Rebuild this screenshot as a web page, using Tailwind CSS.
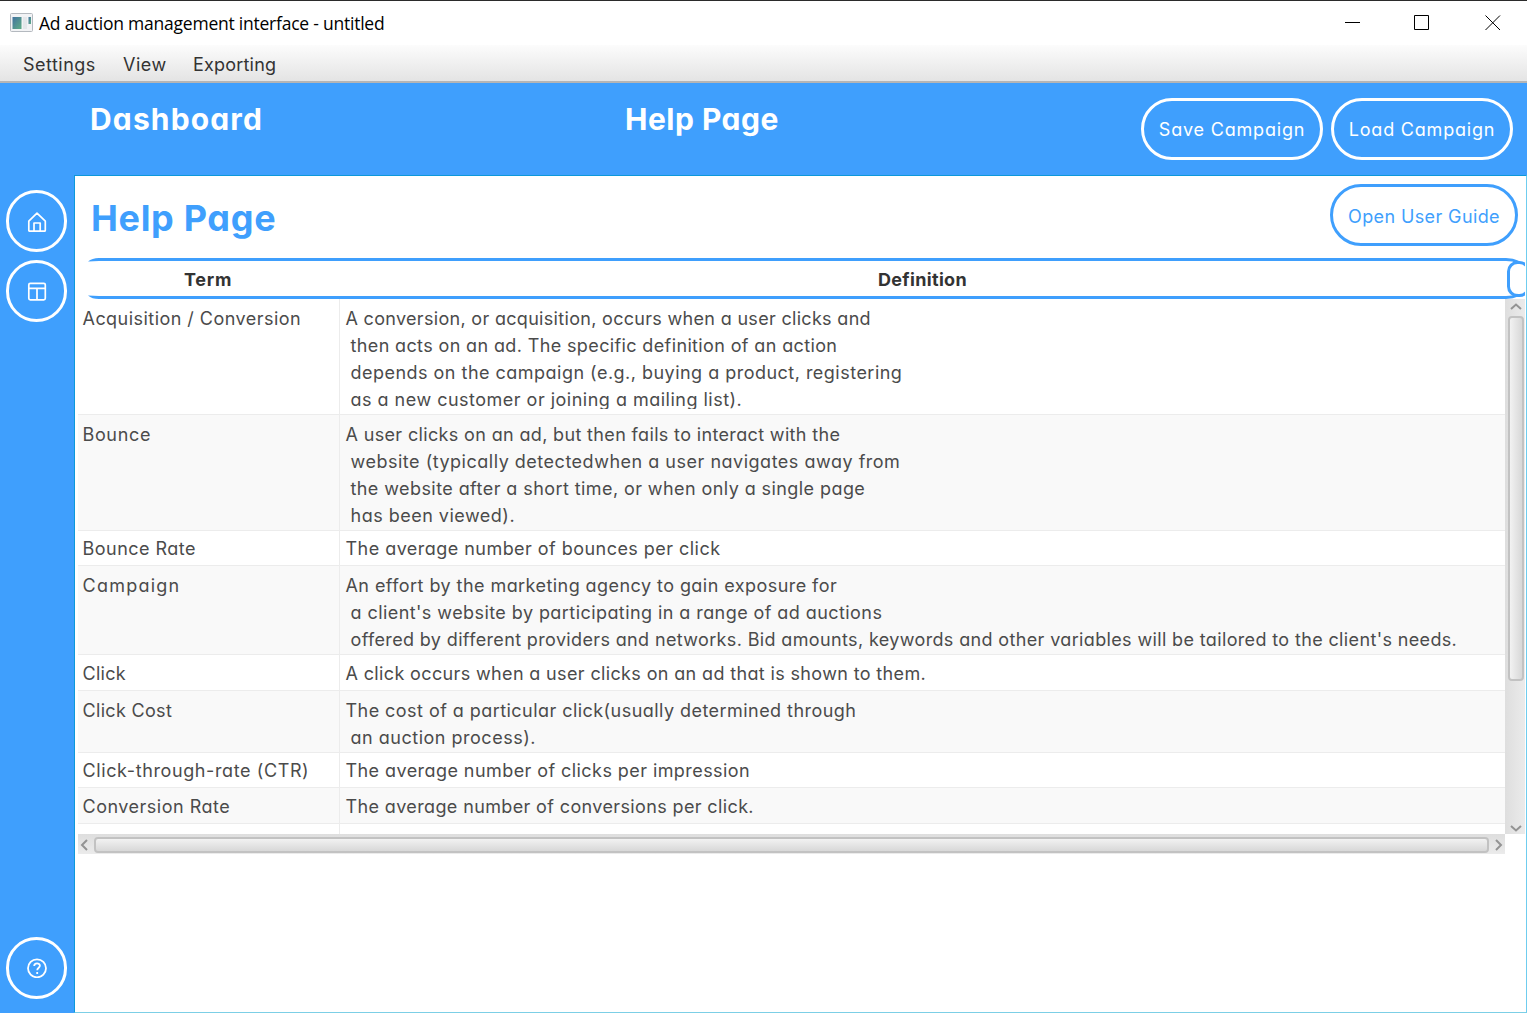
<!DOCTYPE html>
<html lang="en">
<head>
<meta charset="utf-8">
<title>Ad auction management interface</title>
<script src="https://cdn.jsdelivr.net/npm/@tailwindcss/browser@4"></script>
</head>
<body class="w-[1527px] h-[1013px] overflow-hidden bg-white flex flex-col font-[Inter,'Open_Sans',sans-serif] [font-feature-settings:'cv11'] text-[18px] leading-[27px] text-[#4b4b4b] whitespace-nowrap">
<header class="h-[45px] shrink-0 border-t border-[#2b2b2b] flex items-center pl-[10px] text-black">
  <svg class="w-[23px] h-[19px] -mt-[2px]" viewBox="0 0 23 19"><rect x=".5" y=".5" width="22" height="18" rx="1" fill="#f2f3f5" stroke="#b4b9bf"/><defs><linearGradient id="g" x1="0" y1="0" x2="1" y2="1"><stop offset="0" stop-color="#42729f"/><stop offset="1" stop-color="#5fae86"/></linearGradient></defs><rect x="2.500" y="4" width="9" height="12" fill="url(#g)"/><rect x="13" y="4" width="4" height="12" fill="#e4e7ea"/><rect x="18.500" y="4" width="2.500" height="7" fill="url(#g)"/></svg>
  <span class="ml-[6px] text-[17.5px] tracking-[-0.23px] font-['Open_Sans',sans-serif]">Ad auction management interface - untitled</span>
  <div class="ml-auto flex items-center pr-[26px]">
    <svg class="w-4 h-4" viewBox="0 0 16 16" fill="none" stroke="#000"><path d="M0 7.500h15"/></svg>
    <svg class="w-4 h-4 ml-[53px] mr-[55px]" viewBox="0 0 16 16" fill="none" stroke="#000"><path d="M.5.5h14v14H.5z"/></svg>
    <svg class="w-4 h-4" viewBox="0 0 16 16" fill="none" stroke="#000"><path d="M.5.5l14.500 14.500M15 .5L.5 15"/></svg>
  </div>
</header>
<nav class="h-[38px] shrink-0 bg-linear-to-b from-[#fcfcfc] to-[#e4e4e4] border-b-2 border-[#b5b5b5] flex pl-[23px] pt-[6px] text-[#333]">
  <span class="w-[100px] tracking-[0.48px]">Settings</span><span class="w-[70px] tracking-[0.5px]">View</span><span class="tracking-[0.2px]">Exporting</span>
</nav>
<div class="h-[92px] shrink-0 bg-[#3f9ffd] flex text-white pl-[90px] pr-[14px] pt-[15px]">
  <h1 class="w-[535px] font-bold text-[30px] leading-[42px] tracking-[1.15px]">Dashboard</h1>
  <h2 class="font-bold text-[30px] leading-[42px] tracking-[0.5px]">Help Page</h2>
  <div class="ml-auto flex gap-2">
    <button class="w-[182px] h-[62px] rounded-[31px] border-3 border-white flex justify-center items-center pt-px tracking-[0.8px]">Save Campaign</button>
    <button class="w-[182px] h-[62px] rounded-[31px] border-3 border-white flex justify-center items-center pt-px tracking-[0.8px]">Load Campaign</button>
  </div>
</div>
<div class="flex-1 min-h-0 flex">
  <aside class="w-[74px] bg-[#3f9ffd] pt-[15px] pb-[14px] pl-[6px] flex flex-col gap-2">
    <button class="w-[61px] h-[62px] rounded-[31px] border-3 border-white flex justify-center items-center"><svg class="w-5 h-5 mt-px" viewBox="0 0 20 20" fill="none" stroke="#fff" stroke-width="1.700"><path d="M1.800 9.200 10 1.200l8.300 8V18.300q0 .9-.9.9H2.700q-.9 0-.9-.9zM7 19v-8h6.200v8" stroke-linejoin="round"/></svg></button>
    <button class="w-[61px] h-[62px] rounded-[31px] border-3 border-white flex justify-center items-center"><svg class="w-5 h-5 mt-px" viewBox="0 0 20 20" fill="none" stroke="#fff" stroke-width="1.700"><rect x="1.800" y="1.300" width="16.500" height="16.500" rx="1.500"/><path d="M2 6.300h16M10 6.500v11"/></svg></button>
    <button class="mt-auto w-[61px] h-[62px] rounded-[31px] border-3 border-white flex justify-center items-center"><svg class="w-5 h-5" viewBox="0 0 20 20" fill="none" stroke="#fff" stroke-width="1.800"><circle cx="10" cy="10.300" r="9"/><path d="M7.200 8.100c0-3.700 5.700-3.500 5.700-.3 0 2-2.700 2-2.700 4.500M10.200 13.900v2"/></svg></button>
  </aside>
  <main class="flex-1 min-w-0 border-t border-l border-t-[#0d98da] border-l-[#0d98da] border-r border-b border-r-[#6fcdef] border-b-[#7ccfe6] pl-[3px] pt-[8px] flex flex-col">
    <div class="flex h-[74px] pl-[13px] pr-[8px] text-[#3f9ffd]">
      <h2 class="font-bold text-[36px] leading-[50px] mt-[9px] tracking-[0.67px]">Help Page</h2>
      <button class="ml-auto w-[188px] h-[62px] rounded-[31px] border-3 border-[#3f9ffd] flex justify-center items-center pt-[2px] tracking-[0.38px]">Open User Guide</button>
    </div>
    <section class="w-[1447px] h-[596px] flex flex-col">
      <div class="h-[41px] shrink-0 relative flex items-center font-bold text-[#333] overflow-hidden pt-px">
        <svg class="absolute inset-0 w-full h-full" viewBox="0 0 1447 41" fill="none" stroke="#3f9ffd" stroke-width="3"><path d="M20 1.500H1428Q1435 1.500 1440 4M20 39.500H1428Q1435 39.500 1440 37"/><path d="M10 3.500Q14 0 21 0V3zM10 37.500Q14 41 21 41V38z" fill="#3f9ffd" stroke="none"/><rect x="1430.500" y="4.500" width="20" height="33" rx="9"/></svg>
        <span class="w-[260px] text-center tracking-[0.7px]">Term</span><span class="w-[1169px] text-center tracking-[0.33px]">Definition</span>
      </div>
      <div class="flex h-[535px] shrink-0">
        <div class="w-[1427px] overflow-hidden">
          <div class="h-[116px] flex border-b border-[#ececec]">
            <div class="w-[262px] border-r border-[#ececec] pl-[4.5px] pt-[6px] tracking-[0.46px]">Acquisition / Conversion</div>
            <div class="pl-[5.5px] mt-[6px] h-[104px] overflow-hidden"><p class="tracking-[0.31px]">A conversion, or acquisition, occurs when a user clicks and</p><p class="pl-[5px] tracking-[0.37px]">then acts on an ad. The specific definition of an action</p><p class="pl-[5px] tracking-[0.48px]">depends on the campaign (e.g., buying a product, registering</p><p class="pl-[5px] tracking-[0.49px]">as a new customer or joining a mailing list).</p></div>
          </div>
          <div class="h-[116px] flex border-b border-[#ececec] bg-[#f9f9f9]">
            <div class="w-[262px] border-r border-[#ececec] pl-[4.5px] pt-[6px] tracking-[0.65px]">Bounce</div>
            <div class="pl-[5.5px] pt-[6px]"><p class="tracking-[0.35px]">A user clicks on an ad, but then fails to interact with the</p><p class="pl-[5px] tracking-[0.51px]">website (typically detectedwhen a user navigates away from</p><p class="pl-[5px] tracking-[0.42px]">the website after a short time, or when only a single page</p><p class="pl-[5px] tracking-[0.49px]">has been viewed).</p></div>
          </div>
          <div class="h-[35px] flex border-b border-[#ececec]">
            <div class="w-[262px] border-r border-[#ececec] pl-[4.5px] pt-[4px] tracking-[0.48px]">Bounce Rate</div>
            <div class="pl-[5.5px] pt-[4px] tracking-[0.46px]">The average number of bounces per click</div>
          </div>
          <div class="h-[89px] flex border-b border-[#ececec] bg-[#f9f9f9]">
            <div class="w-[262px] border-r border-[#ececec] pl-[4.5px] pt-[6px] tracking-[1.24px]">Campaign</div>
            <div class="pl-[5.5px] pt-[6px]"><p class="tracking-[0.44px]">An effort by the marketing agency to gain exposure for</p><p class="pl-[5px] tracking-[0.43px]">a client's website by participating in a range of ad auctions</p><p class="pl-[5px] tracking-[0.36px]">offered by different providers and networks. Bid amounts, keywords and other variables will be tailored to the client's needs.</p></div>
          </div>
          <div class="h-[36px] flex border-b border-[#ececec]">
            <div class="w-[262px] border-r border-[#ececec] pl-[4.5px] pt-[5px] tracking-[0.3px]">Click</div>
            <div class="pl-[5.5px] pt-[5px] tracking-[0.36px]">A click occurs when a user clicks on an ad that is shown to them.</div>
          </div>
          <div class="h-[62px] flex border-b border-[#ececec] bg-[#f9f9f9]">
            <div class="w-[262px] border-r border-[#ececec] pl-[4.5px] pt-[6px] tracking-[0.32px]">Click Cost</div>
            <div class="pl-[5.5px] pt-[6px]"><p class="tracking-[0.45px]">The cost of a particular click(usually determined through</p><p class="pl-[5px] tracking-[0.51px]">an auction process).</p></div>
          </div>
          <div class="h-[35px] flex border-b border-[#ececec]">
            <div class="w-[262px] border-r border-[#ececec] pl-[4.5px] pt-[4px] tracking-[0.61px]">Click-through-rate (CTR)</div>
            <div class="pl-[5.5px] pt-[4px] tracking-[0.43px]">The average number of clicks per impression</div>
          </div>
          <div class="h-[36px] flex border-b border-[#ececec] bg-[#f9f9f9]">
            <div class="w-[262px] border-r border-[#ececec] pl-[4.5px] pt-[5px] tracking-[0.5px]">Conversion Rate</div>
            <div class="pl-[5.5px] pt-[5px] tracking-[0.37px]">The average number of conversions per click.</div>
          </div>
          <div class="h-[36px] flex">
            <div class="w-[262px] border-r border-[#ececec] pl-[4.5px] pt-[4px] tracking-[0.68px]">Cost-per-acquisition (CPA)</div>
          </div>
        </div>
        <div class="w-[20px] bg-linear-to-r from-[#dedede] to-[#ebebeb] flex flex-col items-center pl-[2px] pt-[4px] pb-[2px]">
          <svg class="w-3 h-[7px] shrink-0" viewBox="0 0 12 7" fill="none" stroke="#939393" stroke-width="2"><path d="M1 6l5-4.500L11 6"/></svg>
          <div class="w-[16px] h-[365px] mt-[6px] rounded-[4px] border-2 border-[#c2c2c2] bg-linear-to-r from-[#f2f2f2] to-[#d8d8d8]"></div>
          <svg class="w-3 h-[7px] mt-auto" viewBox="0 0 12 7" fill="none" stroke="#939393" stroke-width="2"><path d="M1 1l5 4.500L11 1"/></svg>
        </div>
      </div>
      <div class="w-[1427px] h-[20px] shrink-0 bg-linear-to-b from-[#dedede] to-[#ebebeb] flex items-center justify-between px-[2px] pt-[2px]">
        <svg class="w-2 h-3" viewBox="0 0 8 12" fill="none" stroke="#939393" stroke-width="2"><path d="M7 1L2 6l5 5"/></svg>
        <div class="w-[1395px] h-[16px] rounded-[4px] border-2 border-[#c2c2c2] bg-linear-to-b from-[#f2f2f2] to-[#d8d8d8]"></div>
        <svg class="w-2 h-3" viewBox="0 0 8 12" fill="none" stroke="#939393" stroke-width="2"><path d="M1 1l5 5-5 5"/></svg>
      </div>
    </section>
  </main>
</div>
</body>
</html>
